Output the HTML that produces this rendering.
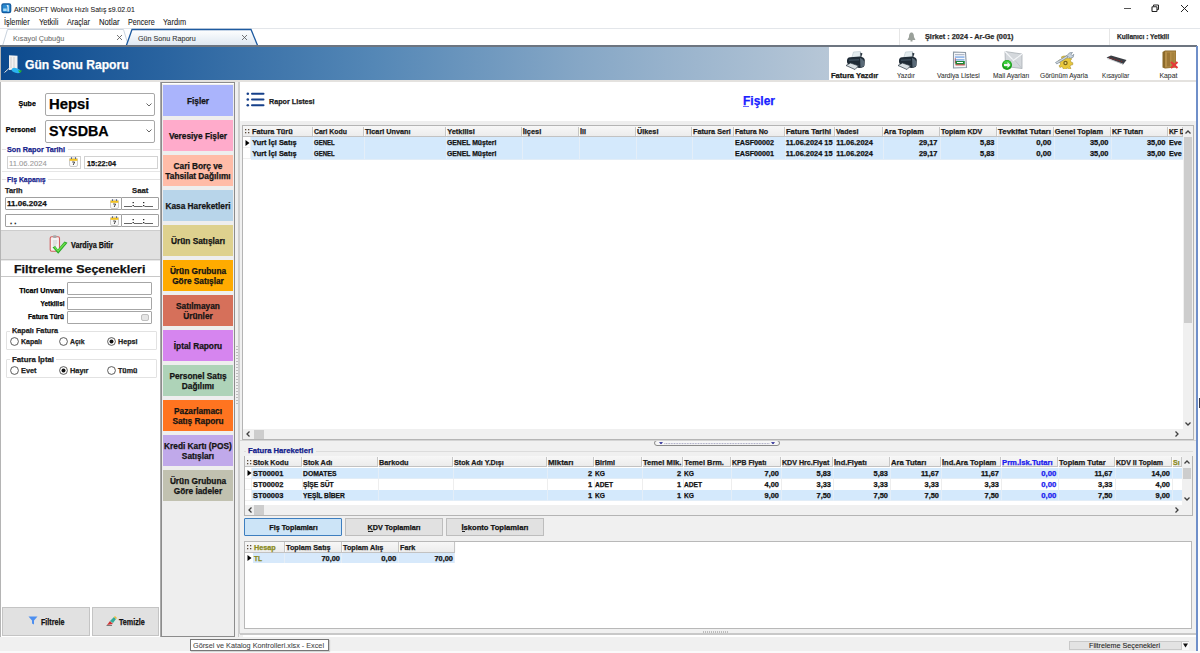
<!DOCTYPE html><html><head><meta charset="utf-8"><style>
html,body{margin:0;padding:0;width:1200px;height:653px;overflow:hidden;background:#fff}
body{position:relative;font-family:"Liberation Sans",sans-serif}
div,span,svg{position:absolute;box-sizing:border-box}
.t{white-space:nowrap;display:block;-webkit-text-stroke:0.25px currentColor}
.r{-webkit-text-stroke:0.08px currentColor}
</style></head><body>
<div style="left:0px;top:0px;width:1200px;height:653px;background:#ffffff"></div>
<svg style="position:absolute;left:1px;top:3px" width="11" height="11" viewBox="0 0 11 11">
<rect x="0.3" y="0.3" width="10" height="10" rx="2.2" fill="#145a9e"/>
<rect x="1.5" y="1.5" width="7.6" height="7.6" rx="1" fill="#2a8ad0"/>
<path d="M2.2 5.5 h3.5 v2.5 h-3.5z" fill="#a8daf6"/>
<path d="M5.5 2 L7.6 2.2 L7.8 8.5 L6.5 8.5 L6.5 4 Z" fill="#f4fbff"/>
</svg>
<span class="t r" style="left:14.40px;top:-0.50px;font-size:7.7px;line-height:20px;font-weight:normal;color:#1b1b1b;transform:scaleX(0.8996);transform-origin:left 0;">AKINSOFT Wolvox Hızlı Satış s9.02.01</span>
<div style="left:1124px;top:7.5px;width:7px;height:1.2px;background:#555"></div>
<svg style="position:absolute;left:1151px;top:4px" width="9" height="8"><path d="M2.5 2.5V1H7.5V5.5H6.2" fill="none" stroke="#222" stroke-width="1"/><rect x="1" y="2.8" width="5" height="4.7" rx="0.8" fill="#fff" stroke="#222" stroke-width="1.1"/></svg>
<svg style="position:absolute;left:1181px;top:4.5px" width="7" height="7"><path d="M0 0L7 7M7 0L0 7" stroke="#222" stroke-width="1"/></svg>
<span class="t r" style="left:4.40px;top:12.00px;font-size:8.3px;line-height:20px;font-weight:normal;color:#1b1b1b;transform:scaleX(0.8812);transform-origin:left 0;">İşlemler</span>
<span class="t r" style="left:38.75px;top:12.00px;font-size:8.3px;line-height:20px;font-weight:normal;color:#1b1b1b;transform:scaleX(0.9074);transform-origin:left 0;">Yetkili</span>
<span class="t r" style="left:66.90px;top:12.00px;font-size:8.3px;line-height:20px;font-weight:normal;color:#1b1b1b;transform:scaleX(0.8711);transform-origin:left 0;">Araçlar</span>
<span class="t r" style="left:98.75px;top:12.00px;font-size:8.3px;line-height:20px;font-weight:normal;color:#1b1b1b;transform:scaleX(0.9305);transform-origin:left 0;">Notlar</span>
<span class="t r" style="left:127.50px;top:12.00px;font-size:8.3px;line-height:20px;font-weight:normal;color:#1b1b1b;transform:scaleX(0.8654);transform-origin:left 0;">Pencere</span>
<span class="t r" style="left:163.00px;top:12.00px;font-size:8.3px;line-height:20px;font-weight:normal;color:#1b1b1b;transform:scaleX(0.8896);transform-origin:left 0;">Yardım</span>
<div style="left:0px;top:28px;width:1200px;height:1px;background:#e3e6ea"></div>
<svg style="position:absolute;left:0;top:28px" width="300" height="19">
<defs><linearGradient id="tg" x1="0" y1="0" x2="0" y2="1"><stop offset="0" stop-color="#ffffff"/><stop offset="1" stop-color="#dbe5f0"/></linearGradient></defs>
<path d="M2.5 18 L7.5 1.5 L123.5 1.5 L128.5 18" fill="#ffffff" stroke="#c9d3de" stroke-width="1"/>
<path d="M126 18.5 L132 1.5 L251 1.5 L258 18.5" fill="url(#tg)" stroke="#1d5aa0" stroke-width="1.3"/>
</svg>
<span class="t r" style="left:13.00px;top:28.50px;font-size:7.8px;line-height:20px;font-weight:normal;color:#6b6b6b;transform:scaleX(0.9307);transform-origin:left 0;">Kısayol Çubuğu</span>
<svg style="position:absolute;left:116.5px;top:34.5px" width="5" height="5"><path d="M0 0L5 5M5 0L0 5" stroke="#555" stroke-width="0.8"/></svg>
<span class="t r" style="left:138.00px;top:28.50px;font-size:7.8px;line-height:20px;font-weight:normal;color:#333;transform:scaleX(0.9185);transform-origin:left 0;">Gün Sonu Raporu</span>
<svg style="position:absolute;left:241.5px;top:34.5px" width="5" height="5"><path d="M0 0L5 5M5 0L0 5" stroke="#555" stroke-width="0.8"/></svg>
<div style="left:899px;top:29px;width:1px;height:16px;background:#e6e6e6"></div>
<svg style="position:absolute;left:907px;top:32px" width="9" height="10"><path d="M4.5 0.5 C6.5 0.5 7 3 7 5 L8.5 8 L0.5 8 L2 5 C2 3 2.5 0.5 4.5 0.5Z" fill="#9aa09a"/><rect x="3.5" y="8" width="2" height="1.5" fill="#9aa09a"/></svg>
<span class="t" style="left:925.30px;top:26.50px;font-size:7px;line-height:20px;font-weight:bold;color:#2b2b2b;transform:scaleX(1.0408);transform-origin:left 0;">Şirket : 2024 - Ar-Ge (001)</span>
<div style="left:1109px;top:29px;width:1px;height:16px;background:#e6e6e6"></div>
<span class="t" style="left:1116.80px;top:26.50px;font-size:7px;line-height:20px;font-weight:bold;color:#2b2b2b;transform:scaleX(0.9370);transform-origin:left 0;">Kullanıcı : Yetkili</span>
<div style="left:0px;top:45px;width:1197px;height:2px;background:#6d7580"></div>
<div style="left:0px;top:47px;width:1px;height:590px;background:#b4b4b4"></div>
<div style="left:1px;top:47px;width:828px;height:33px;background:linear-gradient(to right,#0c4a8e 0%,#2a64a0 20%,#5487b6 45%,#86a7c6 70%,#b7c7d7 100%)"></div>
<div style="left:829px;top:47px;width:367px;height:34px;background:#ffffff"></div>
<div style="left:0px;top:80px;width:1196px;height:2px;background:#e4e2df"></div>
<span class="t" style="left:25.30px;top:55.00px;font-size:12.4px;line-height:20px;font-weight:bold;color:#ffffff;transform:scaleX(0.9776);transform-origin:left 0;">Gün Sonu Raporu</span>
<div style="left:1px;top:82px;width:159px;height:555px;background:#ffffff"></div>
<div style="left:160px;top:82px;width:1px;height:555px;background:#a9a9a9"></div>
<div style="left:45px;top:93px;width:110px;height:23px;border:1px solid #a8a8a8;border-radius:2px;background:#fff"></div>
<svg style="position:absolute;left:146px;top:102.5px" width="6" height="4"><path d="M0.5 0.5L3 3L5.5 0.5" stroke="#555" fill="none" stroke-width="0.9"/></svg>
<div style="left:45px;top:119.5px;width:110px;height:23px;border:1px solid #a8a8a8;border-radius:2px;background:#fff"></div>
<svg style="position:absolute;left:146px;top:129.0px" width="6" height="4"><path d="M0.5 0.5L3 3L5.5 0.5" stroke="#555" fill="none" stroke-width="0.9"/></svg>
<span class="t" style="left:49.30px;top:93.50px;font-size:15.5px;line-height:20px;font-weight:bold;color:#000;transform:scaleX(0.9572);transform-origin:left 0;">Hepsi</span>
<span class="t" style="left:49.00px;top:120.50px;font-size:15.3px;line-height:20px;font-weight:bold;color:#000;transform:scaleX(0.9362);transform-origin:left 0;">SYSDBA</span>
<span class="t" style="left:18.15px;top:93.50px;font-size:7.3px;line-height:20px;font-weight:bold;color:#000;transform:scaleX(0.9694);transform-origin:right 0;">Şube</span>
<span class="t" style="left:5.17px;top:119.50px;font-size:7.3px;line-height:20px;font-weight:bold;color:#000;transform:scaleX(0.9729);transform-origin:right 0;">Personel</span>
<span class="t" style="left:7.00px;top:139.50px;font-size:8px;line-height:20px;font-weight:bold;color:#17238c;transform:scaleX(0.9083);transform-origin:left 0;">Son Rapor Tarihi</span>
<div style="left:2px;top:149px;width:4px;height:1px;background:#e2e2e2"></div>
<div style="left:68px;top:149px;width:92px;height:1px;background:#e2e2e2"></div>
<div style="left:7px;top:156px;width:74px;height:13px;border:1px solid #d2d2d2;background:#fff"></div>
<span class="t r" style="left:9.00px;top:153.50px;font-size:7.6px;line-height:20px;font-weight:normal;color:#9a9a9a;transform:scaleX(1.0088);transform-origin:left 0;">11.06.2024</span>
<svg style="position:absolute;left:69px;top:157px" width="9" height="10" viewBox="0 0 9 10"><rect x="0.5" y="1" width="8" height="8.5" rx="1.5" fill="#fafafa" stroke="#b8b8b8" stroke-width="0.7"/><rect x="0.6" y="1.6" width="7.8" height="2.2" fill="#f0c020"/><rect x="2" y="0.3" width="1" height="1.6" fill="#4a5a8a"/><rect x="6" y="0.3" width="1" height="1.6" fill="#4a5a8a"/><path d="M3.2 5H5.6L4.2 8" stroke="#333" stroke-width="0.9" fill="none"/></svg>
<div style="left:84px;top:156px;width:74px;height:13px;border:1px solid #d2d2d2;background:#fff"></div>
<span class="t" style="left:86.50px;top:153.50px;font-size:7.6px;line-height:20px;font-weight:bold;color:#111;transform:scaleX(0.9534);transform-origin:left 0;">15:22:04</span>
<div style="left:2px;top:171px;width:158px;height:1px;background:#e6e6e6"></div>
<span class="t" style="left:7.00px;top:169.50px;font-size:8px;line-height:20px;font-weight:bold;color:#17238c;transform:scaleX(0.8619);transform-origin:left 0;">Fiş Kapanış</span>
<div style="left:2px;top:178.5px;width:4px;height:1px;background:#e2e2e2"></div>
<div style="left:48px;top:178.5px;width:112px;height:1px;background:#e2e2e2"></div>
<span class="t" style="left:5.40px;top:180.50px;font-size:7.6px;line-height:20px;font-weight:bold;color:#222;transform:scaleX(0.9769);transform-origin:left 0;">Tarih</span>
<span class="t" style="left:131.70px;top:180.50px;font-size:7.6px;line-height:20px;font-weight:bold;color:#222;transform:scaleX(1.0154);transform-origin:left 0;">Saat</span>
<div style="left:5px;top:197px;width:117px;height:13px;border:1px solid #a0a0a0;border-radius:1px;background:#fff"></div>
<div style="left:121px;top:197px;width:38px;height:13px;border:1px solid #a0a0a0;border-radius:1px;background:#fff"></div>
<svg style="position:absolute;left:110px;top:198.5px" width="9" height="10" viewBox="0 0 9 10"><rect x="0.5" y="1" width="8" height="8.5" rx="1.5" fill="#fafafa" stroke="#b8b8b8" stroke-width="0.7"/><rect x="0.6" y="1.6" width="7.8" height="2.2" fill="#f0c020"/><rect x="2" y="0.3" width="1" height="1.6" fill="#4a5a8a"/><rect x="6" y="0.3" width="1" height="1.6" fill="#4a5a8a"/><path d="M3.2 5H5.6L4.2 8" stroke="#333" stroke-width="0.9" fill="none"/></svg>
<svg style="position:absolute;left:124px;top:200px" width="32" height="8"><path d="M0 6.5H8M10 6.5H18.5M20.5 6.5H29" stroke="#555" stroke-width="0.9"/><rect x="8.6" y="2" width="1.2" height="1.2" fill="#111"/><rect x="8.6" y="5" width="1.2" height="1.2" fill="#111"/><rect x="19.1" y="2" width="1.2" height="1.2" fill="#111"/><rect x="19.1" y="5" width="1.2" height="1.2" fill="#111"/></svg>
<div style="left:5px;top:214px;width:117px;height:13px;border:1px solid #a0a0a0;border-radius:1px;background:#fff"></div>
<div style="left:121px;top:214px;width:38px;height:13px;border:1px solid #a0a0a0;border-radius:1px;background:#fff"></div>
<svg style="position:absolute;left:110px;top:215.5px" width="9" height="10" viewBox="0 0 9 10"><rect x="0.5" y="1" width="8" height="8.5" rx="1.5" fill="#fafafa" stroke="#b8b8b8" stroke-width="0.7"/><rect x="0.6" y="1.6" width="7.8" height="2.2" fill="#f0c020"/><rect x="2" y="0.3" width="1" height="1.6" fill="#4a5a8a"/><rect x="6" y="0.3" width="1" height="1.6" fill="#4a5a8a"/><path d="M3.2 5H5.6L4.2 8" stroke="#333" stroke-width="0.9" fill="none"/></svg>
<svg style="position:absolute;left:124px;top:217px" width="32" height="8"><path d="M0 6.5H8M10 6.5H18.5M20.5 6.5H29" stroke="#555" stroke-width="0.9"/><rect x="8.6" y="2" width="1.2" height="1.2" fill="#111"/><rect x="8.6" y="5" width="1.2" height="1.2" fill="#111"/><rect x="19.1" y="2" width="1.2" height="1.2" fill="#111"/><rect x="19.1" y="5" width="1.2" height="1.2" fill="#111"/></svg>
<span class="t" style="left:7.00px;top:193.50px;font-size:7.6px;line-height:20px;font-weight:bold;color:#111;transform:scaleX(1.0555);transform-origin:left 0;">11.06.2024</span>
<span class="t" style="left:10.00px;top:211.50px;font-size:7.6px;line-height:20px;font-weight:bold;color:#111;">. .</span>
<div style="left:1px;top:229.5px;width:159px;height:30px;background:#e1e1e1;border-top:1.5px solid #cdcdcd;border-bottom:1.5px solid #c4c4c4"></div>
<svg style="position:absolute;left:49px;top:235px" width="20" height="20" viewBox="0 0 20 20">
<rect x="1.2" y="1.8" width="9.3" height="14.5" rx="1.5" fill="#f6f0f0" stroke="#d06060" stroke-width="1.1"/>
<rect x="3" y="3.5" width="5.8" height="10" fill="#f4f4f4"/>
<rect x="4" y="0.3" width="3.6" height="2.6" rx="1" fill="#a8a8a8"/>
<path d="M3.8 6h4.5M3.8 8h4.5M3.8 10h3.5" stroke="#c0c0c0" stroke-width="0.8"/>
<path d="M3.5 12.2 L6.2 11 L8.8 14.5 L15.5 6.5 L18.5 7.8 L9.2 18.8 Z" fill="#2aa82a"/>
<path d="M5 12.4 L6.2 11.8 L8.9 15.3 L15.6 7.4 L17 8 L9.2 17 Z" fill="#6ee04a"/>
</svg>
<span class="t" style="left:70.50px;top:235.00px;font-size:8.3px;line-height:20px;font-weight:bold;color:#111;transform:scaleX(0.8712);transform-origin:left 0;">Vardiya Bitir</span>
<div style="left:1px;top:260px;width:159px;height:17px;background:#fff;border-bottom:1px solid #c8c8c8;border-top:1px solid #e8e8e8"></div>
<span class="t" style="left:20.43px;top:259.00px;font-size:11.3px;line-height:20px;font-weight:bold;color:#111;transform:scaleX(1.1011);transform-origin:center 0;">Filtreleme Seçenekleri</span>
<span class="t" style="left:17.97px;top:280.50px;font-size:7.4px;line-height:20px;font-weight:bold;color:#000;transform:scaleX(0.9712);transform-origin:right 0;">Ticari Unvanı</span>
<div style="left:67px;top:282.4px;width:85px;height:12.5px;border:1px solid #a6a6a6;border-radius:1px;background:#fff"></div>
<span class="t" style="left:36.74px;top:293.50px;font-size:7.4px;line-height:20px;font-weight:bold;color:#000;transform:scaleX(0.8708);transform-origin:right 0;">Yetkilisi</span>
<div style="left:67px;top:297px;width:85px;height:12.5px;border:1px solid #a6a6a6;border-radius:1px;background:#fff"></div>
<span class="t" style="left:23.19px;top:306.50px;font-size:7.4px;line-height:20px;font-weight:bold;color:#000;transform:scaleX(0.8757);transform-origin:right 0;">Fatura Türü</span>
<div style="left:67px;top:311.4px;width:85px;height:12.5px;border:1px solid #a6a6a6;border-radius:1px;background:#fff"></div>
<svg style="position:absolute;left:141px;top:314px" width="8" height="7"><rect x="0.5" y="0.5" width="7" height="6" rx="1.5" fill="#e6e6e6" stroke="#aaa" stroke-width="0.7"/></svg>
<div style="left:5.6px;top:330.6px;width:151.2px;height:19.399999999999977px;border:1px solid #e2e2e2;border-radius:1px"></div>
<div style="left:10px;top:328.6px;width:50.2px;height:4px;background:#fff"></div>
<span class="t" style="left:11.70px;top:320.50px;font-size:7.6px;line-height:20px;font-weight:bold;color:#222;transform:scaleX(0.9597);transform-origin:left 0;">Kapalı Fatura</span>
<svg style="position:absolute;left:10px;top:336.5px" width="9" height="9"><circle cx="4.5" cy="4.5" r="3.9" fill="#fff" stroke="#333" stroke-width="0.8"/></svg>
<span class="t" style="left:21.00px;top:331.50px;font-size:7.6px;line-height:20px;font-weight:bold;color:#222;transform:scaleX(0.9208);transform-origin:left 0;">Kapalı</span>
<svg style="position:absolute;left:58.5px;top:336.5px" width="9" height="9"><circle cx="4.5" cy="4.5" r="3.9" fill="#fff" stroke="#333" stroke-width="0.8"/></svg>
<span class="t" style="left:69.50px;top:331.50px;font-size:7.6px;line-height:20px;font-weight:bold;color:#222;transform:scaleX(0.9033);transform-origin:left 0;">Açık</span>
<svg style="position:absolute;left:106.5px;top:336.5px" width="9" height="9"><circle cx="4.5" cy="4.5" r="3.9" fill="#fff" stroke="#333" stroke-width="0.8"/><circle cx="4.5" cy="4.5" r="2" fill="#111"/></svg>
<span class="t" style="left:117.50px;top:331.50px;font-size:7.6px;line-height:20px;font-weight:bold;color:#222;transform:scaleX(0.9423);transform-origin:left 0;">Hepsi</span>
<div style="left:5.6px;top:359.3px;width:151.2px;height:19.099999999999966px;border:1px solid #e2e2e2;border-radius:1px"></div>
<div style="left:10px;top:357.3px;width:46px;height:4px;background:#fff"></div>
<span class="t" style="left:11.70px;top:349.50px;font-size:7.6px;line-height:20px;font-weight:bold;color:#222;transform:scaleX(1.0254);transform-origin:left 0;">Fatura İptal</span>
<svg style="position:absolute;left:10px;top:365.5px" width="9" height="9"><circle cx="4.5" cy="4.5" r="3.9" fill="#fff" stroke="#333" stroke-width="0.8"/></svg>
<span class="t" style="left:21.00px;top:360.50px;font-size:7.6px;line-height:20px;font-weight:bold;color:#222;transform:scaleX(0.9656);transform-origin:left 0;">Evet</span>
<svg style="position:absolute;left:58.5px;top:365.5px" width="9" height="9"><circle cx="4.5" cy="4.5" r="3.9" fill="#fff" stroke="#333" stroke-width="0.8"/><circle cx="4.5" cy="4.5" r="2" fill="#111"/></svg>
<span class="t" style="left:69.50px;top:360.50px;font-size:7.6px;line-height:20px;font-weight:bold;color:#222;transform:scaleX(0.9731);transform-origin:left 0;">Hayır</span>
<svg style="position:absolute;left:106.5px;top:365.5px" width="9" height="9"><circle cx="4.5" cy="4.5" r="3.9" fill="#fff" stroke="#333" stroke-width="0.8"/></svg>
<span class="t" style="left:117.50px;top:360.50px;font-size:7.6px;line-height:20px;font-weight:bold;color:#222;transform:scaleX(0.9428);transform-origin:left 0;">Tümü</span>
<div style="left:2px;top:606.7px;width:88.4px;height:29.6px;background:#e1e1e1;border:1px solid #c4c4c4"></div>
<div style="left:92.2px;top:606.7px;width:67px;height:29.6px;background:#e1e1e1;border:1px solid #c4c4c4"></div>
<svg style="position:absolute;left:28px;top:616px" width="10" height="9"><path d="M0.5 0.5H9.5L6 4.5V8.5L4 7.5V4.5Z" fill="#4d8ff0"/></svg>
<span class="t" style="left:40.60px;top:612.50px;font-size:8.2px;line-height:20px;font-weight:bold;color:#111;transform:scaleX(0.8704);transform-origin:left 0;">Filtrele</span>
<svg style="position:absolute;left:106px;top:615px" width="11" height="11"><path d="M1 10 L4 6 L7 9Z" fill="#c33"/><path d="M4 6 L8 2 L10 4 L7 8Z" fill="#3a9"/><path d="M8 2 L9 1 L11 3 L10 4Z" fill="#eb3"/><path d="M0.5 10.5H6" stroke="#333" stroke-width="0.6"/></svg>
<span class="t" style="left:119.20px;top:612.50px;font-size:8.2px;line-height:20px;font-weight:bold;color:#111;transform:scaleX(0.8755);transform-origin:left 0;">Temizle</span>
<div style="left:161px;top:82px;width:74px;height:555px;background:#eeeeee;border:1px solid #8c8c8c"></div>
<div style="left:162px;top:83px;width:72px;height:1px;background:#fff"></div>
<div style="left:163px;top:85px;width:69.5px;height:31px;background:#aab4fc"></div>
<span class="t" style="left:186.93px;top:91.00px;font-size:8.3px;line-height:20px;font-weight:bold;color:#141414;">Fişler</span>
<div style="left:163px;top:120px;width:69.5px;height:31px;background:#ffabcb"></div>
<span class="t" style="left:168.93px;top:126.00px;font-size:8.3px;line-height:20px;font-weight:bold;color:#141414;">Veresiye Fişler</span>
<div style="left:163px;top:155px;width:69.5px;height:31px;background:#ffbca8"></div>
<span class="t" style="left:173.55px;top:156.00px;font-size:8.3px;line-height:20px;font-weight:bold;color:#141414;">Cari Borç ve</span>
<span class="t" style="left:165.33px;top:166.00px;font-size:8.3px;line-height:20px;font-weight:bold;color:#141414;">Tahsilat Dağılımı</span>
<div style="left:163px;top:190px;width:69.5px;height:31px;background:#b8d5ea"></div>
<span class="t" style="left:165.47px;top:196.00px;font-size:8.3px;line-height:20px;font-weight:bold;color:#141414;">Kasa Hareketleri</span>
<div style="left:163px;top:225px;width:69.5px;height:31px;background:#ded18e"></div>
<span class="t" style="left:171.02px;top:231.00px;font-size:8.3px;line-height:20px;font-weight:bold;color:#141414;">Ürün Satışları</span>
<div style="left:163px;top:260px;width:69.5px;height:31px;background:#ffab00"></div>
<span class="t" style="left:169.88px;top:261.00px;font-size:8.3px;line-height:20px;font-weight:bold;color:#141414;">Ürün Grubuna</span>
<span class="t" style="left:172.17px;top:271.00px;font-size:8.3px;line-height:20px;font-weight:bold;color:#141414;">Göre Satışlar</span>
<div style="left:163px;top:295px;width:69.5px;height:31px;background:#d6705a"></div>
<span class="t" style="left:176.09px;top:296.00px;font-size:8.3px;line-height:20px;font-weight:bold;color:#141414;">Satılmayan</span>
<span class="t" style="left:183.24px;top:306.00px;font-size:8.3px;line-height:20px;font-weight:bold;color:#141414;">Ürünler</span>
<div style="left:163px;top:330px;width:69.5px;height:31px;background:#d685ef"></div>
<span class="t" style="left:173.79px;top:336.00px;font-size:8.3px;line-height:20px;font-weight:bold;color:#141414;">İptal Raporu</span>
<div style="left:163px;top:365px;width:69.5px;height:31px;background:#aed3b8"></div>
<span class="t" style="left:169.40px;top:366.00px;font-size:8.3px;line-height:20px;font-weight:bold;color:#141414;">Personel Satış</span>
<span class="t" style="left:181.86px;top:376.00px;font-size:8.3px;line-height:20px;font-weight:bold;color:#141414;">Dağılımı</span>
<div style="left:163px;top:400px;width:69.5px;height:31px;background:#ff7420"></div>
<span class="t" style="left:174.01px;top:401.00px;font-size:8.3px;line-height:20px;font-weight:bold;color:#141414;">Pazarlamacı</span>
<span class="t" style="left:172.40px;top:411.00px;font-size:8.3px;line-height:20px;font-weight:bold;color:#141414;">Satış Raporu</span>
<div style="left:163px;top:435px;width:69.5px;height:31px;background:#c0a9ea"></div>
<span class="t" style="left:164.10px;top:436.00px;font-size:8.3px;line-height:20px;font-weight:bold;color:#141414;">Kredi Kartı (POS)</span>
<span class="t" style="left:181.85px;top:446.00px;font-size:8.3px;line-height:20px;font-weight:bold;color:#141414;">Satışları</span>
<div style="left:163px;top:470px;width:69.5px;height:31px;background:#c1c1b0"></div>
<span class="t" style="left:169.88px;top:471.00px;font-size:8.3px;line-height:20px;font-weight:bold;color:#141414;">Ürün Grubuna</span>
<span class="t" style="left:173.78px;top:481.00px;font-size:8.3px;line-height:20px;font-weight:bold;color:#141414;">Göre İadeler</span>
<div style="left:235px;top:82px;width:8px;height:555px;background:#f0f0f0"></div>
<div style="left:237.5px;top:82px;width:1px;height:555px;background:#c9c9c9"></div>
<div style="left:238px;top:82px;width:1.5px;height:552px;background:#cfcfcf"></div>
<div style="left:239.5px;top:82px;width:957px;height:39px;background:#ffffff"></div>
<div style="left:239.5px;top:121px;width:957px;height:513px;background:#f0f0f0"></div>
<div style="left:242px;top:121px;width:951px;height:4px;background:#eeeeee"></div>
<svg style="position:absolute;left:246px;top:92px" width="20" height="16">
<circle cx="1.8" cy="1.8" r="1.3" fill="#16408a"/><circle cx="1.8" cy="7.5" r="1.3" fill="#16408a"/><circle cx="1.8" cy="13.3" r="1.3" fill="#16408a"/>
<rect x="5" y="0.8" width="13.5" height="2" rx="1" fill="#16408a"/><rect x="5" y="6.5" width="13.5" height="2" rx="1" fill="#16408a"/><rect x="5" y="12.3" width="13.5" height="2" rx="1" fill="#16408a"/>
</svg>
<span class="t" style="left:269.00px;top:91.50px;font-size:7.4px;line-height:20px;font-weight:bold;color:#1b1b1b;transform:scaleX(0.9728);transform-origin:left 0;">Rapor Listesi</span>
<span class="t" style="left:742.99px;top:91.00px;font-size:12px;line-height:20px;font-weight:bold;color:#1a22ff;">Fişler</span>
<div style="left:743px;top:106px;width:6px;height:1px;background:#6a6aff"></div>
<div style="left:242px;top:125px;width:951.5px;height:314.5px;background:#ffffff;border:1px solid #b4b4b4"></div>
<div style="left:243px;top:125.5px;width:949.5px;height:11px;background:linear-gradient(#f7f7f7,#ececec);border-bottom:1px solid #c2c2c2"></div>
<svg style="position:absolute;left:245px;top:129.0px" width="6" height="5"><rect x="0" y="0" width="1.3" height="1.3" fill="#5a4a3a"/><rect x="3" y="0" width="1.3" height="1.3" fill="#5a4a3a"/><rect x="0" y="3" width="1.3" height="1.3" fill="#5a4a3a"/><rect x="3" y="3" width="1.3" height="1.3" fill="#5a4a3a"/></svg>
<div style="left:312px;top:126.5px;width:1px;height:9.5px;background:#c6c6c6;border-right:1px solid #fbfbfb;width:2px"></div>
<div style="left:251px;top:120px;width:62.5px;height:18px;overflow:hidden"><span class="t" style="left:1.2px;top:1.50px;font-size:7.4px;line-height:20px;font-weight:bold;color:#1b1b1b;transform:scaleX(0.9900);transform-origin:left 0;">Fatura Türü</span></div>
<div style="left:363px;top:126.5px;width:1px;height:9.5px;background:#c6c6c6;border-right:1px solid #fbfbfb;width:2px"></div>
<div style="left:313px;top:120px;width:51.5px;height:18px;overflow:hidden"><span class="t" style="left:1.2px;top:1.50px;font-size:7.4px;line-height:20px;font-weight:bold;color:#1b1b1b;transform:scaleX(0.9300);transform-origin:left 0;">Cari Kodu</span></div>
<div style="left:445px;top:126.5px;width:1px;height:9.5px;background:#c6c6c6;border-right:1px solid #fbfbfb;width:2px"></div>
<div style="left:364px;top:120px;width:82.5px;height:18px;overflow:hidden"><span class="t" style="left:1.2px;top:1.50px;font-size:7.4px;line-height:20px;font-weight:bold;color:#1b1b1b;transform:scaleX(0.9833);transform-origin:left 0;">Ticari Unvanı</span></div>
<div style="left:520.5px;top:126.5px;width:1px;height:9.5px;background:#c6c6c6;border-right:1px solid #fbfbfb;width:2px"></div>
<div style="left:446px;top:120px;width:76.0px;height:18px;overflow:hidden"><span class="t" style="left:1.2px;top:1.50px;font-size:7.4px;line-height:20px;font-weight:bold;color:#1b1b1b;">Yetkilisi</span></div>
<div style="left:577.5px;top:126.5px;width:1px;height:9.5px;background:#c6c6c6;border-right:1px solid #fbfbfb;width:2px"></div>
<div style="left:521.5px;top:120px;width:57.5px;height:18px;overflow:hidden"><span class="t" style="left:1.2px;top:1.50px;font-size:7.4px;line-height:20px;font-weight:bold;color:#1b1b1b;">İlçesi</span></div>
<div style="left:634.5px;top:126.5px;width:1px;height:9.5px;background:#c6c6c6;border-right:1px solid #fbfbfb;width:2px"></div>
<div style="left:578.5px;top:120px;width:57.5px;height:18px;overflow:hidden"><span class="t" style="left:1.2px;top:1.50px;font-size:7.4px;line-height:20px;font-weight:bold;color:#1b1b1b;transform:scaleX(0.9667);transform-origin:left 0;">İli</span></div>
<div style="left:691px;top:126.5px;width:1px;height:9.5px;background:#c6c6c6;border-right:1px solid #fbfbfb;width:2px"></div>
<div style="left:635.5px;top:120px;width:57.0px;height:18px;overflow:hidden"><span class="t" style="left:1.2px;top:1.50px;font-size:7.4px;line-height:20px;font-weight:bold;color:#1b1b1b;transform:scaleX(0.9833);transform-origin:left 0;">Ülkesi</span></div>
<div style="left:733px;top:126.5px;width:1px;height:9.5px;background:#c6c6c6;border-right:1px solid #fbfbfb;width:2px"></div>
<div style="left:692px;top:120px;width:42.5px;height:18px;overflow:hidden"><span class="t" style="left:1.2px;top:1.50px;font-size:7.4px;line-height:20px;font-weight:bold;color:#1b1b1b;transform:scaleX(0.9800);transform-origin:left 0;">Fatura Seri</span></div>
<div style="left:783.5px;top:126.5px;width:1px;height:9.5px;background:#c6c6c6;border-right:1px solid #fbfbfb;width:2px"></div>
<div style="left:734px;top:120px;width:51.0px;height:18px;overflow:hidden"><span class="t" style="left:1.2px;top:1.50px;font-size:7.4px;line-height:20px;font-weight:bold;color:#1b1b1b;transform:scaleX(0.9600);transform-origin:left 0;">Fatura No</span></div>
<div style="left:834px;top:126.5px;width:1px;height:9.5px;background:#c6c6c6;border-right:1px solid #fbfbfb;width:2px"></div>
<div style="left:784.5px;top:120px;width:51.0px;height:18px;overflow:hidden"><span class="t" style="left:1.2px;top:1.50px;font-size:7.4px;line-height:20px;font-weight:bold;color:#1b1b1b;transform:scaleX(1.0200);transform-origin:left 0;">Fatura Tarihi</span></div>
<div style="left:881.5px;top:126.5px;width:1px;height:9.5px;background:#c6c6c6;border-right:1px solid #fbfbfb;width:2px"></div>
<div style="left:835px;top:120px;width:48.0px;height:18px;overflow:hidden"><span class="t" style="left:1.2px;top:1.50px;font-size:7.4px;line-height:20px;font-weight:bold;color:#1b1b1b;transform:scaleX(0.9600);transform-origin:left 0;">Vadesi</span></div>
<div style="left:938.5px;top:126.5px;width:1px;height:9.5px;background:#c6c6c6;border-right:1px solid #fbfbfb;width:2px"></div>
<div style="left:882.5px;top:120px;width:57.5px;height:18px;overflow:hidden"><span class="t" style="left:1.2px;top:1.50px;font-size:7.4px;line-height:20px;font-weight:bold;color:#1b1b1b;">Ara Toplam</span></div>
<div style="left:995.5px;top:126.5px;width:1px;height:9.5px;background:#c6c6c6;border-right:1px solid #fbfbfb;width:2px"></div>
<div style="left:939.5px;top:120px;width:57.5px;height:18px;overflow:hidden"><span class="t" style="left:1.2px;top:1.50px;font-size:7.4px;line-height:20px;font-weight:bold;color:#1b1b1b;transform:scaleX(0.9500);transform-origin:left 0;">Toplam KDV</span></div>
<div style="left:1052.5px;top:126.5px;width:1px;height:9.5px;background:#c6c6c6;border-right:1px solid #fbfbfb;width:2px"></div>
<div style="left:996.5px;top:120px;width:57.5px;height:18px;overflow:hidden"><span class="t" style="left:1.2px;top:1.50px;font-size:7.4px;line-height:20px;font-weight:bold;color:#1b1b1b;transform:scaleX(1.0700);transform-origin:left 0;">Tevkifat Tutarı</span></div>
<div style="left:1109.5px;top:126.5px;width:1px;height:9.5px;background:#c6c6c6;border-right:1px solid #fbfbfb;width:2px"></div>
<div style="left:1053.5px;top:120px;width:57.5px;height:18px;overflow:hidden"><span class="t" style="left:1.2px;top:1.50px;font-size:7.4px;line-height:20px;font-weight:bold;color:#1b1b1b;">Genel Toplam</span></div>
<div style="left:1166.5px;top:126.5px;width:1px;height:9.5px;background:#c6c6c6;border-right:1px solid #fbfbfb;width:2px"></div>
<div style="left:1110.5px;top:120px;width:57.5px;height:18px;overflow:hidden"><span class="t" style="left:1.2px;top:1.50px;font-size:7.4px;line-height:20px;font-weight:bold;color:#1b1b1b;transform:scaleX(0.9700);transform-origin:left 0;">KF Tutarı</span></div>
<div style="left:1181.5px;top:126.5px;width:1px;height:9.5px;background:#c6c6c6;border-right:1px solid #fbfbfb;width:2px"></div>
<div style="left:1167.5px;top:120px;width:15.5px;height:18px;overflow:hidden"><span class="t" style="left:1.2px;top:1.50px;font-size:7.4px;line-height:20px;font-weight:bold;color:#1b1b1b;transform:scaleX(0.9000);transform-origin:left 0;">KF D</span></div>
<div style="left:251px;top:137px;width:931.5px;height:11px;background:#d4e9fc"></div>
<div style="left:251px;top:147.5px;width:931.5px;height:1px;background:#e2edf7"></div>
<div style="left:313px;top:137px;width:1px;height:11px;background:#e4eef8"></div>
<div style="left:251px;top:131px;width:62.5px;height:18px;overflow:hidden"><span class="t" style="left:1.2px;top:1.50px;font-size:7.4px;line-height:20px;font-weight:bold;color:#111111;">Yurt İçi Satış</span></div>
<div style="left:364px;top:137px;width:1px;height:11px;background:#e4eef8"></div>
<div style="left:313px;top:131px;width:51.5px;height:18px;overflow:hidden"><span class="t" style="left:1.2px;top:1.50px;font-size:7.4px;line-height:20px;font-weight:bold;color:#111111;transform:scaleX(0.8100);transform-origin:left 0;">GENEL</span></div>
<div style="left:446px;top:137px;width:1px;height:11px;background:#e4eef8"></div>
<div style="left:521.5px;top:137px;width:1px;height:11px;background:#e4eef8"></div>
<div style="left:446px;top:131px;width:76.0px;height:18px;overflow:hidden"><span class="t" style="left:1.2px;top:1.50px;font-size:7.4px;line-height:20px;font-weight:bold;color:#111111;transform:scaleX(0.9200);transform-origin:left 0;">GENEL Müşteri</span></div>
<div style="left:578.5px;top:137px;width:1px;height:11px;background:#e4eef8"></div>
<div style="left:635.5px;top:137px;width:1px;height:11px;background:#e4eef8"></div>
<div style="left:692px;top:137px;width:1px;height:11px;background:#e4eef8"></div>
<div style="left:734px;top:137px;width:1px;height:11px;background:#e4eef8"></div>
<div style="left:784.5px;top:137px;width:1px;height:11px;background:#e4eef8"></div>
<div style="left:734px;top:131px;width:51.0px;height:18px;overflow:hidden"><span class="t" style="left:1.2px;top:1.50px;font-size:7.4px;line-height:20px;font-weight:bold;color:#111111;transform:scaleX(0.9700);transform-origin:left 0;">EASF00002</span></div>
<div style="left:835px;top:137px;width:1px;height:11px;background:#e4eef8"></div>
<div style="left:784.5px;top:131px;width:51.0px;height:18px;overflow:hidden"><span class="t" style="left:1.2px;top:1.50px;font-size:7.4px;line-height:20px;font-weight:bold;color:#111111;">11.06.2024 15</span></div>
<div style="left:882.5px;top:137px;width:1px;height:11px;background:#e4eef8"></div>
<div style="left:835px;top:131px;width:48.0px;height:18px;overflow:hidden"><span class="t" style="left:1.2px;top:1.50px;font-size:7.4px;line-height:20px;font-weight:bold;color:#111111;">11.06.2024</span></div>
<div style="left:939.5px;top:137px;width:1px;height:11px;background:#e4eef8"></div>
<span class="t" style="left:918.98px;top:132.50px;font-size:7.4px;line-height:20px;font-weight:bold;color:#111111;">29,17</span>
<div style="left:996.5px;top:137px;width:1px;height:11px;background:#e4eef8"></div>
<span class="t" style="left:980.10px;top:132.50px;font-size:7.4px;line-height:20px;font-weight:bold;color:#111111;">5,83</span>
<div style="left:1053.5px;top:137px;width:1px;height:11px;background:#e4eef8"></div>
<span class="t" style="left:1037.10px;top:132.50px;font-size:7.4px;line-height:20px;font-weight:bold;color:#111111;transform:scaleX(1.0500);transform-origin:right 0;">0,00</span>
<div style="left:1110.5px;top:137px;width:1px;height:11px;background:#e4eef8"></div>
<span class="t" style="left:1089.98px;top:132.50px;font-size:7.4px;line-height:20px;font-weight:bold;color:#111111;">35,00</span>
<div style="left:1167.5px;top:137px;width:1px;height:11px;background:#e4eef8"></div>
<span class="t" style="left:1146.98px;top:132.50px;font-size:7.4px;line-height:20px;font-weight:bold;color:#111111;">35,00</span>
<div style="left:1182.5px;top:137px;width:1px;height:11px;background:#e4eef8"></div>
<div style="left:1167.5px;top:131px;width:15.5px;height:18px;overflow:hidden"><span class="t" style="left:1.2px;top:1.50px;font-size:7.4px;line-height:20px;font-weight:bold;color:#111111;transform:scaleX(0.9667);transform-origin:left 0;">Eve</span></div>
<div style="left:250px;top:137px;width:1px;height:11px;background:#eeeeee"></div>
<div style="left:243px;top:147px;width:7px;height:1px;background:#f0f0f0"></div>
<svg style="position:absolute;left:245px;top:139.5px" width="5" height="6"><path d="M0.5 0L4.5 3L0.5 6Z" fill="#000"/></svg>
<div style="left:251px;top:148px;width:931.5px;height:11px;background:#d4e9fc"></div>
<div style="left:251px;top:158.5px;width:931.5px;height:1px;background:#e2edf7"></div>
<div style="left:313px;top:148px;width:1px;height:11px;background:#e4eef8"></div>
<div style="left:251px;top:142px;width:62.5px;height:18px;overflow:hidden"><span class="t" style="left:1.2px;top:1.50px;font-size:7.4px;line-height:20px;font-weight:bold;color:#111111;">Yurt İçi Satış</span></div>
<div style="left:364px;top:148px;width:1px;height:11px;background:#e4eef8"></div>
<div style="left:313px;top:142px;width:51.5px;height:18px;overflow:hidden"><span class="t" style="left:1.2px;top:1.50px;font-size:7.4px;line-height:20px;font-weight:bold;color:#111111;transform:scaleX(0.8100);transform-origin:left 0;">GENEL</span></div>
<div style="left:446px;top:148px;width:1px;height:11px;background:#e4eef8"></div>
<div style="left:521.5px;top:148px;width:1px;height:11px;background:#e4eef8"></div>
<div style="left:446px;top:142px;width:76.0px;height:18px;overflow:hidden"><span class="t" style="left:1.2px;top:1.50px;font-size:7.4px;line-height:20px;font-weight:bold;color:#111111;transform:scaleX(0.9200);transform-origin:left 0;">GENEL Müşteri</span></div>
<div style="left:578.5px;top:148px;width:1px;height:11px;background:#e4eef8"></div>
<div style="left:635.5px;top:148px;width:1px;height:11px;background:#e4eef8"></div>
<div style="left:692px;top:148px;width:1px;height:11px;background:#e4eef8"></div>
<div style="left:734px;top:148px;width:1px;height:11px;background:#e4eef8"></div>
<div style="left:784.5px;top:148px;width:1px;height:11px;background:#e4eef8"></div>
<div style="left:734px;top:142px;width:51.0px;height:18px;overflow:hidden"><span class="t" style="left:1.2px;top:1.50px;font-size:7.4px;line-height:20px;font-weight:bold;color:#111111;transform:scaleX(0.9700);transform-origin:left 0;">EASF00001</span></div>
<div style="left:835px;top:148px;width:1px;height:11px;background:#e4eef8"></div>
<div style="left:784.5px;top:142px;width:51.0px;height:18px;overflow:hidden"><span class="t" style="left:1.2px;top:1.50px;font-size:7.4px;line-height:20px;font-weight:bold;color:#111111;">11.06.2024 15</span></div>
<div style="left:882.5px;top:148px;width:1px;height:11px;background:#e4eef8"></div>
<div style="left:835px;top:142px;width:48.0px;height:18px;overflow:hidden"><span class="t" style="left:1.2px;top:1.50px;font-size:7.4px;line-height:20px;font-weight:bold;color:#111111;">11.06.2024</span></div>
<div style="left:939.5px;top:148px;width:1px;height:11px;background:#e4eef8"></div>
<span class="t" style="left:918.98px;top:143.50px;font-size:7.4px;line-height:20px;font-weight:bold;color:#111111;">29,17</span>
<div style="left:996.5px;top:148px;width:1px;height:11px;background:#e4eef8"></div>
<span class="t" style="left:980.10px;top:143.50px;font-size:7.4px;line-height:20px;font-weight:bold;color:#111111;">5,83</span>
<div style="left:1053.5px;top:148px;width:1px;height:11px;background:#e4eef8"></div>
<span class="t" style="left:1037.10px;top:143.50px;font-size:7.4px;line-height:20px;font-weight:bold;color:#111111;transform:scaleX(1.0500);transform-origin:right 0;">0,00</span>
<div style="left:1110.5px;top:148px;width:1px;height:11px;background:#e4eef8"></div>
<span class="t" style="left:1089.98px;top:143.50px;font-size:7.4px;line-height:20px;font-weight:bold;color:#111111;">35,00</span>
<div style="left:1167.5px;top:148px;width:1px;height:11px;background:#e4eef8"></div>
<span class="t" style="left:1146.98px;top:143.50px;font-size:7.4px;line-height:20px;font-weight:bold;color:#111111;">35,00</span>
<div style="left:1182.5px;top:148px;width:1px;height:11px;background:#e4eef8"></div>
<div style="left:1167.5px;top:142px;width:15.5px;height:18px;overflow:hidden"><span class="t" style="left:1.2px;top:1.50px;font-size:7.4px;line-height:20px;font-weight:bold;color:#111111;transform:scaleX(0.9667);transform-origin:left 0;">Eve</span></div>
<div style="left:250px;top:148px;width:1px;height:11px;background:#eeeeee"></div>
<div style="left:243px;top:158px;width:7px;height:1px;background:#f0f0f0"></div>
<div style="left:1182.5px;top:125.5px;width:10.0px;height:303.5px;background:#f0f0f0"></div>
<div style="left:1183.5px;top:137px;width:8.0px;height:185.5px;background:#cdcdcd"></div>
<svg style="position:absolute;left:1184.5px;top:129.5px" width="6" height="4"><path d="M0.5 3.5L3 1L5.5 3.5" stroke="#404040" fill="none" stroke-width="1.3"/></svg>
<svg style="position:absolute;left:1184.5px;top:421.5px" width="6" height="4"><path d="M0.5 0.5L3 3L5.5 0.5" stroke="#404040" fill="none" stroke-width="1.3"/></svg>
<div style="left:243px;top:429px;width:949.5px;height:10px;background:#f0f0f0"></div>
<div style="left:254px;top:429.5px;width:10px;height:9px;background:#cdcdcd"></div>
<svg style="position:absolute;left:245.5px;top:431.0px" width="4" height="6"><path d="M3.5 0.5L1 3L3.5 5.5" stroke="#404040" fill="none" stroke-width="1.3"/></svg>
<svg style="position:absolute;left:1175px;top:431.0px" width="4" height="6"><path d="M0.5 0.5L3 3L0.5 5.5" stroke="#404040" fill="none" stroke-width="1.3"/></svg>
<svg style="position:absolute;left:654px;top:440px" width="127" height="6">
<rect x="0.5" y="0.5" width="125" height="5" rx="2.5" fill="#f6f6f6" stroke="#8a8a8a" stroke-width="1"/>
<path d="M5 2.2L9 2.2L7 4.3Z" fill="#10108a"/><path d="M117 2.2L121 2.2L119 4.3Z" fill="#10108a"/>
<path d="M10.5 3.6H116" stroke="#6a6a9a" stroke-width="0.7" stroke-dasharray="0.8 0.8"/>
</svg>
<div style="left:239.5px;top:440px;width:957px;height:1px;background:#d4d4d4"></div>
<div style="left:243.5px;top:450.5px;width:949px;height:1px;background:#dcdcdc"></div>
<div style="left:246px;top:446px;width:70px;height:8px;background:#f0f0f0"></div>
<span class="t" style="left:248.00px;top:440.50px;font-size:7.4px;line-height:20px;font-weight:bold;color:#13208c;transform:scaleX(1.0361);transform-origin:left 0;">Fatura Hareketleri</span>
<div style="left:244px;top:455.5px;width:948.5px;height:60.5px;background:#ffffff;border:1px solid #b4b4b4"></div>
<div style="left:245px;top:456.0px;width:946.5px;height:11px;background:linear-gradient(#f7f7f7,#ececec);border-bottom:1px solid #c2c2c2"></div>
<svg style="position:absolute;left:247px;top:459.5px" width="6" height="5"><rect x="0" y="0" width="1.3" height="1.3" fill="#5a4a3a"/><rect x="3" y="0" width="1.3" height="1.3" fill="#5a4a3a"/><rect x="0" y="3" width="1.3" height="1.3" fill="#5a4a3a"/><rect x="3" y="3" width="1.3" height="1.3" fill="#5a4a3a"/></svg>
<div style="left:301px;top:457.0px;width:1px;height:9.5px;background:#c6c6c6;border-right:1px solid #fbfbfb;width:2px"></div>
<div style="left:252px;top:451px;width:50.5px;height:18px;overflow:hidden"><span class="t" style="left:1.2px;top:1.50px;font-size:7.4px;line-height:20px;font-weight:bold;color:#1b1b1b;transform:scaleX(0.9600);transform-origin:left 0;">Stok Kodu</span></div>
<div style="left:376.5px;top:457.0px;width:1px;height:9.5px;background:#c6c6c6;border-right:1px solid #fbfbfb;width:2px"></div>
<div style="left:302px;top:451px;width:76.0px;height:18px;overflow:hidden"><span class="t" style="left:1.2px;top:1.50px;font-size:7.4px;line-height:20px;font-weight:bold;color:#1b1b1b;transform:scaleX(0.9900);transform-origin:left 0;">Stok Adı</span></div>
<div style="left:451.5px;top:457.0px;width:1px;height:9.5px;background:#c6c6c6;border-right:1px solid #fbfbfb;width:2px"></div>
<div style="left:377.5px;top:451px;width:75.5px;height:18px;overflow:hidden"><span class="t" style="left:1.2px;top:1.50px;font-size:7.4px;line-height:20px;font-weight:bold;color:#1b1b1b;transform:scaleX(0.9857);transform-origin:left 0;">Barkodu</span></div>
<div style="left:546px;top:457.0px;width:1px;height:9.5px;background:#c6c6c6;border-right:1px solid #fbfbfb;width:2px"></div>
<div style="left:452.5px;top:451px;width:95.0px;height:18px;overflow:hidden"><span class="t" style="left:1.2px;top:1.50px;font-size:7.4px;line-height:20px;font-weight:bold;color:#1b1b1b;transform:scaleX(0.9692);transform-origin:left 0;">Stok Adı Y.Dışı</span></div>
<div style="left:593px;top:457.0px;width:1px;height:9.5px;background:#c6c6c6;border-right:1px solid #fbfbfb;width:2px"></div>
<div style="left:547px;top:451px;width:47.5px;height:18px;overflow:hidden"><span class="t" style="left:1.2px;top:1.50px;font-size:7.4px;line-height:20px;font-weight:bold;color:#1b1b1b;transform:scaleX(1.0700);transform-origin:left 0;">Miktarı</span></div>
<div style="left:641px;top:457.0px;width:1px;height:9.5px;background:#c6c6c6;border-right:1px solid #fbfbfb;width:2px"></div>
<div style="left:594px;top:451px;width:48.5px;height:18px;overflow:hidden"><span class="t" style="left:1.2px;top:1.50px;font-size:7.4px;line-height:20px;font-weight:bold;color:#1b1b1b;transform:scaleX(0.9500);transform-origin:left 0;">Birimi</span></div>
<div style="left:682px;top:457.0px;width:1px;height:9.5px;background:#c6c6c6;border-right:1px solid #fbfbfb;width:2px"></div>
<div style="left:642px;top:451px;width:41.5px;height:18px;overflow:hidden"><span class="t" style="left:1.2px;top:1.50px;font-size:7.4px;line-height:20px;font-weight:bold;color:#1b1b1b;transform:scaleX(1.0300);transform-origin:left 0;">Temel Mik.</span></div>
<div style="left:730px;top:457.0px;width:1px;height:9.5px;background:#c6c6c6;border-right:1px solid #fbfbfb;width:2px"></div>
<div style="left:683px;top:451px;width:48.5px;height:18px;overflow:hidden"><span class="t" style="left:1.2px;top:1.50px;font-size:7.4px;line-height:20px;font-weight:bold;color:#1b1b1b;">Temel Brm.</span></div>
<div style="left:780px;top:457.0px;width:1px;height:9.5px;background:#c6c6c6;border-right:1px solid #fbfbfb;width:2px"></div>
<div style="left:731px;top:451px;width:50.5px;height:18px;overflow:hidden"><span class="t" style="left:1.2px;top:1.50px;font-size:7.4px;line-height:20px;font-weight:bold;color:#1b1b1b;transform:scaleX(0.9300);transform-origin:left 0;">KPB Fiyatı</span></div>
<div style="left:832px;top:457.0px;width:1px;height:9.5px;background:#c6c6c6;border-right:1px solid #fbfbfb;width:2px"></div>
<div style="left:781px;top:451px;width:52.5px;height:18px;overflow:hidden"><span class="t" style="left:1.2px;top:1.50px;font-size:7.4px;line-height:20px;font-weight:bold;color:#1b1b1b;transform:scaleX(0.9600);transform-origin:left 0;">KDV Hrc.Fiyat</span></div>
<div style="left:889px;top:457.0px;width:1px;height:9.5px;background:#c6c6c6;border-right:1px solid #fbfbfb;width:2px"></div>
<div style="left:833px;top:451px;width:57.5px;height:18px;overflow:hidden"><span class="t" style="left:1.2px;top:1.50px;font-size:7.4px;line-height:20px;font-weight:bold;color:#1b1b1b;transform:scaleX(1.0100);transform-origin:left 0;">İnd.Fiyatı</span></div>
<div style="left:940px;top:457.0px;width:1px;height:9.5px;background:#c6c6c6;border-right:1px solid #fbfbfb;width:2px"></div>
<div style="left:890px;top:451px;width:51.5px;height:18px;overflow:hidden"><span class="t" style="left:1.2px;top:1.50px;font-size:7.4px;line-height:20px;font-weight:bold;color:#1b1b1b;transform:scaleX(1.0300);transform-origin:left 0;">Ara Tutarı</span></div>
<div style="left:1000px;top:457.0px;width:1px;height:9.5px;background:#c6c6c6;border-right:1px solid #fbfbfb;width:2px"></div>
<div style="left:941px;top:451px;width:60.5px;height:18px;overflow:hidden"><span class="t" style="left:1.2px;top:1.50px;font-size:7.4px;line-height:20px;font-weight:bold;color:#1b1b1b;transform:scaleX(1.0200);transform-origin:left 0;">İnd.Ara Toplam</span></div>
<div style="left:1057px;top:457.0px;width:1px;height:9.5px;background:#c6c6c6;border-right:1px solid #fbfbfb;width:2px"></div>
<div style="left:1001px;top:451px;width:57.5px;height:18px;overflow:hidden"><span class="t" style="left:1.2px;top:1.50px;font-size:7.4px;line-height:20px;font-weight:bold;color:#1a1aee;transform:scaleX(1.0400);transform-origin:left 0;">Prm.İsk.Tutarı</span></div>
<div style="left:1113.5px;top:457.0px;width:1px;height:9.5px;background:#c6c6c6;border-right:1px solid #fbfbfb;width:2px"></div>
<div style="left:1058px;top:451px;width:57.0px;height:18px;overflow:hidden"><span class="t" style="left:1.2px;top:1.50px;font-size:7.4px;line-height:20px;font-weight:bold;color:#1b1b1b;transform:scaleX(1.0200);transform-origin:left 0;">Toplam Tutar</span></div>
<div style="left:1171px;top:457.0px;width:1px;height:9.5px;background:#c6c6c6;border-right:1px solid #fbfbfb;width:2px"></div>
<div style="left:1114.5px;top:451px;width:58.0px;height:18px;overflow:hidden"><span class="t" style="left:1.2px;top:1.50px;font-size:7.4px;line-height:20px;font-weight:bold;color:#1b1b1b;transform:scaleX(0.9500);transform-origin:left 0;">KDV li Toplam</span></div>
<div style="left:1181px;top:457.0px;width:1px;height:9.5px;background:#c6c6c6;border-right:1px solid #fbfbfb;width:2px"></div>
<div style="left:1172px;top:451px;width:10.5px;height:18px;overflow:hidden"><span class="t" style="left:1.2px;top:1.50px;font-size:7.4px;line-height:20px;font-weight:bold;color:#8a8a20;transform:scaleX(0.9500);transform-origin:left 0;">Sı</span></div>
<div style="left:252px;top:467.5px;width:930px;height:11px;background:#d4e9fc"></div>
<div style="left:252px;top:478.0px;width:930px;height:1px;background:#e2edf7"></div>
<div style="left:302px;top:467.5px;width:1px;height:11px;background:#e4eef8"></div>
<div style="left:252px;top:462px;width:50.5px;height:18px;overflow:hidden"><span class="t" style="left:1.2px;top:1.50px;font-size:7.4px;line-height:20px;font-weight:bold;color:#111111;transform:scaleX(1.0100);transform-origin:left 0;">ST00001</span></div>
<div style="left:377.5px;top:467.5px;width:1px;height:11px;background:#e4eef8"></div>
<div style="left:302px;top:462px;width:76.0px;height:18px;overflow:hidden"><span class="t" style="left:1.2px;top:1.50px;font-size:7.4px;line-height:20px;font-weight:bold;color:#111111;transform:scaleX(0.9200);transform-origin:left 0;">DOMATES</span></div>
<div style="left:452.5px;top:467.5px;width:1px;height:11px;background:#e4eef8"></div>
<div style="left:547px;top:467.5px;width:1px;height:11px;background:#e4eef8"></div>
<div style="left:594px;top:467.5px;width:1px;height:11px;background:#e4eef8"></div>
<span class="t" style="left:587.88px;top:463.50px;font-size:7.4px;line-height:20px;font-weight:bold;color:#111111;">2</span>
<div style="left:642px;top:467.5px;width:1px;height:11px;background:#e4eef8"></div>
<div style="left:594px;top:462px;width:48.5px;height:18px;overflow:hidden"><span class="t" style="left:1.2px;top:1.50px;font-size:7.4px;line-height:20px;font-weight:bold;color:#111111;transform:scaleX(0.9000);transform-origin:left 0;">KG</span></div>
<div style="left:683px;top:467.5px;width:1px;height:11px;background:#e4eef8"></div>
<span class="t" style="left:676.88px;top:463.50px;font-size:7.4px;line-height:20px;font-weight:bold;color:#111111;">2</span>
<div style="left:731px;top:467.5px;width:1px;height:11px;background:#e4eef8"></div>
<div style="left:683px;top:462px;width:48.5px;height:18px;overflow:hidden"><span class="t" style="left:1.2px;top:1.50px;font-size:7.4px;line-height:20px;font-weight:bold;color:#111111;transform:scaleX(0.9000);transform-origin:left 0;">KG</span></div>
<div style="left:781px;top:467.5px;width:1px;height:11px;background:#e4eef8"></div>
<span class="t" style="left:764.60px;top:463.50px;font-size:7.4px;line-height:20px;font-weight:bold;color:#111111;">7,00</span>
<div style="left:833px;top:467.5px;width:1px;height:11px;background:#e4eef8"></div>
<span class="t" style="left:816.60px;top:463.50px;font-size:7.4px;line-height:20px;font-weight:bold;color:#111111;">5,83</span>
<div style="left:890px;top:467.5px;width:1px;height:11px;background:#e4eef8"></div>
<span class="t" style="left:873.60px;top:463.50px;font-size:7.4px;line-height:20px;font-weight:bold;color:#111111;">5,83</span>
<div style="left:941px;top:467.5px;width:1px;height:11px;background:#e4eef8"></div>
<span class="t" style="left:920.89px;top:463.50px;font-size:7.4px;line-height:20px;font-weight:bold;color:#111111;">11,67</span>
<div style="left:1001px;top:467.5px;width:1px;height:11px;background:#e4eef8"></div>
<span class="t" style="left:980.89px;top:463.50px;font-size:7.4px;line-height:20px;font-weight:bold;color:#111111;">11,67</span>
<div style="left:1058px;top:467.5px;width:1px;height:11px;background:#e4eef8"></div>
<span class="t" style="left:1041.60px;top:463.50px;font-size:7.4px;line-height:20px;font-weight:bold;color:#1a1aee;transform:scaleX(1.0500);transform-origin:right 0;">0,00</span>
<div style="left:1114.5px;top:467.5px;width:1px;height:11px;background:#e4eef8"></div>
<span class="t" style="left:1094.39px;top:463.50px;font-size:7.4px;line-height:20px;font-weight:bold;color:#111111;">11,67</span>
<div style="left:1172px;top:467.5px;width:1px;height:11px;background:#e4eef8"></div>
<span class="t" style="left:1151.48px;top:463.50px;font-size:7.4px;line-height:20px;font-weight:bold;color:#111111;">14,00</span>
<div style="left:1182px;top:467.5px;width:1px;height:11px;background:#e4eef8"></div>
<div style="left:251px;top:467.5px;width:1px;height:11px;background:#eeeeee"></div>
<div style="left:245px;top:477.5px;width:6px;height:1px;background:#f0f0f0"></div>
<svg style="position:absolute;left:247px;top:470.0px" width="5" height="6"><path d="M0.5 0L4.5 3L0.5 6Z" fill="#000"/></svg>
<div style="left:302px;top:478.5px;width:1px;height:11px;background:#eeeeee"></div>
<div style="left:252px;top:473px;width:50.5px;height:18px;overflow:hidden"><span class="t" style="left:1.2px;top:1.50px;font-size:7.4px;line-height:20px;font-weight:bold;color:#111111;transform:scaleX(1.0100);transform-origin:left 0;">ST00002</span></div>
<div style="left:377.5px;top:478.5px;width:1px;height:11px;background:#eeeeee"></div>
<div style="left:302px;top:473px;width:76.0px;height:18px;overflow:hidden"><span class="t" style="left:1.2px;top:1.50px;font-size:7.4px;line-height:20px;font-weight:bold;color:#111111;transform:scaleX(0.9100);transform-origin:left 0;">ŞİŞE SÜT</span></div>
<div style="left:452.5px;top:478.5px;width:1px;height:11px;background:#eeeeee"></div>
<div style="left:547px;top:478.5px;width:1px;height:11px;background:#eeeeee"></div>
<div style="left:594px;top:478.5px;width:1px;height:11px;background:#eeeeee"></div>
<span class="t" style="left:587.88px;top:474.50px;font-size:7.4px;line-height:20px;font-weight:bold;color:#111111;">1</span>
<div style="left:642px;top:478.5px;width:1px;height:11px;background:#eeeeee"></div>
<div style="left:594px;top:473px;width:48.5px;height:18px;overflow:hidden"><span class="t" style="left:1.2px;top:1.50px;font-size:7.4px;line-height:20px;font-weight:bold;color:#111111;transform:scaleX(0.9000);transform-origin:left 0;">ADET</span></div>
<div style="left:683px;top:478.5px;width:1px;height:11px;background:#eeeeee"></div>
<span class="t" style="left:676.88px;top:474.50px;font-size:7.4px;line-height:20px;font-weight:bold;color:#111111;">1</span>
<div style="left:731px;top:478.5px;width:1px;height:11px;background:#eeeeee"></div>
<div style="left:683px;top:473px;width:48.5px;height:18px;overflow:hidden"><span class="t" style="left:1.2px;top:1.50px;font-size:7.4px;line-height:20px;font-weight:bold;color:#111111;transform:scaleX(0.9000);transform-origin:left 0;">ADET</span></div>
<div style="left:781px;top:478.5px;width:1px;height:11px;background:#eeeeee"></div>
<span class="t" style="left:764.60px;top:474.50px;font-size:7.4px;line-height:20px;font-weight:bold;color:#111111;">4,00</span>
<div style="left:833px;top:478.5px;width:1px;height:11px;background:#eeeeee"></div>
<span class="t" style="left:816.60px;top:474.50px;font-size:7.4px;line-height:20px;font-weight:bold;color:#111111;">3,33</span>
<div style="left:890px;top:478.5px;width:1px;height:11px;background:#eeeeee"></div>
<span class="t" style="left:873.60px;top:474.50px;font-size:7.4px;line-height:20px;font-weight:bold;color:#111111;">3,33</span>
<div style="left:941px;top:478.5px;width:1px;height:11px;background:#eeeeee"></div>
<span class="t" style="left:924.60px;top:474.50px;font-size:7.4px;line-height:20px;font-weight:bold;color:#111111;">3,33</span>
<div style="left:1001px;top:478.5px;width:1px;height:11px;background:#eeeeee"></div>
<span class="t" style="left:984.60px;top:474.50px;font-size:7.4px;line-height:20px;font-weight:bold;color:#111111;">3,33</span>
<div style="left:1058px;top:478.5px;width:1px;height:11px;background:#eeeeee"></div>
<span class="t" style="left:1041.60px;top:474.50px;font-size:7.4px;line-height:20px;font-weight:bold;color:#1a1aee;transform:scaleX(1.0500);transform-origin:right 0;">0,00</span>
<div style="left:1114.5px;top:478.5px;width:1px;height:11px;background:#eeeeee"></div>
<span class="t" style="left:1098.10px;top:474.50px;font-size:7.4px;line-height:20px;font-weight:bold;color:#111111;">3,33</span>
<div style="left:1172px;top:478.5px;width:1px;height:11px;background:#eeeeee"></div>
<span class="t" style="left:1155.60px;top:474.50px;font-size:7.4px;line-height:20px;font-weight:bold;color:#111111;">4,00</span>
<div style="left:1182px;top:478.5px;width:1px;height:11px;background:#eeeeee"></div>
<div style="left:251px;top:478.5px;width:1px;height:11px;background:#eeeeee"></div>
<div style="left:245px;top:488.5px;width:6px;height:1px;background:#f0f0f0"></div>
<div style="left:252px;top:489.5px;width:930px;height:11px;background:#d4e9fc"></div>
<div style="left:252px;top:500.0px;width:930px;height:1px;background:#e2edf7"></div>
<div style="left:302px;top:489.5px;width:1px;height:11px;background:#e4eef8"></div>
<div style="left:252px;top:484px;width:50.5px;height:18px;overflow:hidden"><span class="t" style="left:1.2px;top:1.50px;font-size:7.4px;line-height:20px;font-weight:bold;color:#111111;transform:scaleX(1.0100);transform-origin:left 0;">ST00003</span></div>
<div style="left:377.5px;top:489.5px;width:1px;height:11px;background:#e4eef8"></div>
<div style="left:302px;top:484px;width:76.0px;height:18px;overflow:hidden"><span class="t" style="left:1.2px;top:1.50px;font-size:7.4px;line-height:20px;font-weight:bold;color:#111111;transform:scaleX(0.9050);transform-origin:left 0;">YEŞİL BİBER</span></div>
<div style="left:452.5px;top:489.5px;width:1px;height:11px;background:#e4eef8"></div>
<div style="left:547px;top:489.5px;width:1px;height:11px;background:#e4eef8"></div>
<div style="left:594px;top:489.5px;width:1px;height:11px;background:#e4eef8"></div>
<span class="t" style="left:587.88px;top:485.50px;font-size:7.4px;line-height:20px;font-weight:bold;color:#111111;">1</span>
<div style="left:642px;top:489.5px;width:1px;height:11px;background:#e4eef8"></div>
<div style="left:594px;top:484px;width:48.5px;height:18px;overflow:hidden"><span class="t" style="left:1.2px;top:1.50px;font-size:7.4px;line-height:20px;font-weight:bold;color:#111111;transform:scaleX(0.9000);transform-origin:left 0;">KG</span></div>
<div style="left:683px;top:489.5px;width:1px;height:11px;background:#e4eef8"></div>
<span class="t" style="left:676.88px;top:485.50px;font-size:7.4px;line-height:20px;font-weight:bold;color:#111111;">1</span>
<div style="left:731px;top:489.5px;width:1px;height:11px;background:#e4eef8"></div>
<div style="left:683px;top:484px;width:48.5px;height:18px;overflow:hidden"><span class="t" style="left:1.2px;top:1.50px;font-size:7.4px;line-height:20px;font-weight:bold;color:#111111;transform:scaleX(0.9000);transform-origin:left 0;">KG</span></div>
<div style="left:781px;top:489.5px;width:1px;height:11px;background:#e4eef8"></div>
<span class="t" style="left:764.60px;top:485.50px;font-size:7.4px;line-height:20px;font-weight:bold;color:#111111;">9,00</span>
<div style="left:833px;top:489.5px;width:1px;height:11px;background:#e4eef8"></div>
<span class="t" style="left:816.60px;top:485.50px;font-size:7.4px;line-height:20px;font-weight:bold;color:#111111;">7,50</span>
<div style="left:890px;top:489.5px;width:1px;height:11px;background:#e4eef8"></div>
<span class="t" style="left:873.60px;top:485.50px;font-size:7.4px;line-height:20px;font-weight:bold;color:#111111;">7,50</span>
<div style="left:941px;top:489.5px;width:1px;height:11px;background:#e4eef8"></div>
<span class="t" style="left:924.60px;top:485.50px;font-size:7.4px;line-height:20px;font-weight:bold;color:#111111;">7,50</span>
<div style="left:1001px;top:489.5px;width:1px;height:11px;background:#e4eef8"></div>
<span class="t" style="left:984.60px;top:485.50px;font-size:7.4px;line-height:20px;font-weight:bold;color:#111111;">7,50</span>
<div style="left:1058px;top:489.5px;width:1px;height:11px;background:#e4eef8"></div>
<span class="t" style="left:1041.60px;top:485.50px;font-size:7.4px;line-height:20px;font-weight:bold;color:#1a1aee;transform:scaleX(1.0500);transform-origin:right 0;">0,00</span>
<div style="left:1114.5px;top:489.5px;width:1px;height:11px;background:#e4eef8"></div>
<span class="t" style="left:1098.10px;top:485.50px;font-size:7.4px;line-height:20px;font-weight:bold;color:#111111;">7,50</span>
<div style="left:1172px;top:489.5px;width:1px;height:11px;background:#e4eef8"></div>
<span class="t" style="left:1155.60px;top:485.50px;font-size:7.4px;line-height:20px;font-weight:bold;color:#111111;">9,00</span>
<div style="left:1182px;top:489.5px;width:1px;height:11px;background:#e4eef8"></div>
<div style="left:251px;top:489.5px;width:1px;height:11px;background:#eeeeee"></div>
<div style="left:245px;top:499.5px;width:6px;height:1px;background:#f0f0f0"></div>
<div style="left:1182px;top:456px;width:9.5px;height:48.5px;background:#f0f0f0"></div>
<div style="left:1183px;top:468px;width:7.5px;height:10.5px;background:#cdcdcd"></div>
<svg style="position:absolute;left:1183.75px;top:460px" width="6" height="4"><path d="M0.5 3.5L3 1L5.5 3.5" stroke="#404040" fill="none" stroke-width="1.3"/></svg>
<svg style="position:absolute;left:1183.75px;top:497.0px" width="6" height="4"><path d="M0.5 0.5L3 3L5.5 0.5" stroke="#404040" fill="none" stroke-width="1.3"/></svg>
<div style="left:245px;top:504.5px;width:946.5px;height:10.5px;background:#f0f0f0"></div>
<div style="left:254px;top:505.0px;width:10px;height:9.5px;background:#cdcdcd"></div>
<svg style="position:absolute;left:247.5px;top:506.75px" width="4" height="6"><path d="M3.5 0.5L1 3L3.5 5.5" stroke="#404040" fill="none" stroke-width="1.3"/></svg>
<svg style="position:absolute;left:1175px;top:506.75px" width="4" height="6"><path d="M0.5 0.5L3 3L0.5 5.5" stroke="#404040" fill="none" stroke-width="1.3"/></svg>
<div style="left:244px;top:518px;width:98px;height:18px;background:#cce4f7;border:1px solid #3d7ebf;border-radius:1px"></div>
<span class="t" style="left:267.52px;top:517.50px;font-size:7.6px;line-height:20px;font-weight:bold;color:#111;transform:scaleX(0.9518);transform-origin:center 0;">Fiş Toplamları</span>
<div style="left:345px;top:518px;width:98px;height:18px;background:#e1e1e1;border:1px solid #bdbdbd"></div>
<span class="t" style="left:365.99px;top:517.50px;font-size:7.6px;line-height:20px;font-weight:bold;color:#111;transform:scaleX(0.9460);transform-origin:center 0;">KDV Toplamları</span>
<div style="left:367.5px;top:531px;width:5px;height:0.8px;background:#222"></div>
<div style="left:446px;top:518px;width:98px;height:18px;background:#e1e1e1;border:1px solid #bdbdbd"></div>
<span class="t" style="left:461.50px;top:517.50px;font-size:7.6px;line-height:20px;font-weight:bold;color:#111;">İskonto Toplamları</span>
<div style="left:461.5px;top:531px;width:3px;height:0.8px;background:#222"></div>
<div style="left:244px;top:540.5px;width:948px;height:88px;background:#ffffff;border:1px solid #b8b8b8"></div>
<div style="left:245px;top:541.5px;width:210px;height:11px;background:linear-gradient(#f7f7f7,#ececec);border-bottom:1px solid #c2c2c2"></div>
<svg style="position:absolute;left:247px;top:545px" width="6" height="5"><rect x="0" y="0" width="1.3" height="1.3" fill="#5a4a3a"/><rect x="3" y="0" width="1.3" height="1.3" fill="#5a4a3a"/><rect x="0" y="3" width="1.3" height="1.3" fill="#5a4a3a"/><rect x="3" y="3" width="1.3" height="1.3" fill="#5a4a3a"/></svg>
<div style="left:283.5px;top:542px;width:1px;height:10px;background:#c6c6c6;border-right:1px solid #fbfbfb;width:2px"></div>
<div style="left:253px;top:536px;width:32.0px;height:18px;overflow:hidden"><span class="t" style="left:1.2px;top:1.50px;font-size:7.4px;line-height:20px;font-weight:bold;color:#8a8a20;transform:scaleX(0.9800);transform-origin:left 0;">Hesap</span></div>
<div style="left:341px;top:542px;width:1px;height:10px;background:#c6c6c6;border-right:1px solid #fbfbfb;width:2px"></div>
<div style="left:284.5px;top:536px;width:58.0px;height:18px;overflow:hidden"><span class="t" style="left:1.2px;top:1.50px;font-size:7.4px;line-height:20px;font-weight:bold;color:#1b1b1b;transform:scaleX(0.9818);transform-origin:left 0;">Toplam Satış</span></div>
<div style="left:397.5px;top:542px;width:1px;height:10px;background:#c6c6c6;border-right:1px solid #fbfbfb;width:2px"></div>
<div style="left:342px;top:536px;width:57.0px;height:18px;overflow:hidden"><span class="t" style="left:1.2px;top:1.50px;font-size:7.4px;line-height:20px;font-weight:bold;color:#1b1b1b;transform:scaleX(0.9800);transform-origin:left 0;">Toplam Alış</span></div>
<div style="left:454px;top:542px;width:1px;height:10px;background:#c6c6c6;border-right:1px solid #fbfbfb;width:2px"></div>
<div style="left:398.5px;top:536px;width:57.0px;height:18px;overflow:hidden"><span class="t" style="left:1.2px;top:1.50px;font-size:7.4px;line-height:20px;font-weight:bold;color:#1b1b1b;transform:scaleX(0.9750);transform-origin:left 0;">Fark</span></div>
<div style="left:253px;top:552.5px;width:202px;height:10.5px;background:#d7e9fb"></div>
<div style="left:283.5px;top:552.5px;width:1px;height:10.5px;background:#e6eef6"></div>
<div style="left:253px;top:547px;width:32.0px;height:18px;overflow:hidden"><span class="t" style="left:1.2px;top:1.50px;font-size:7.4px;line-height:20px;font-weight:bold;color:#8a8a20;transform:scaleX(0.9000);transform-origin:left 0;">TL</span></div>
<div style="left:341px;top:552.5px;width:1px;height:10.5px;background:#e6eef6"></div>
<span class="t" style="left:321.48px;top:548.50px;font-size:7.4px;line-height:20px;font-weight:bold;color:#111;">70,00</span>
<div style="left:397.5px;top:552.5px;width:1px;height:10.5px;background:#e6eef6"></div>
<span class="t" style="left:382.10px;top:548.50px;font-size:7.4px;line-height:20px;font-weight:bold;color:#111;transform:scaleX(1.0500);transform-origin:right 0;">0,00</span>
<div style="left:454px;top:552.5px;width:1px;height:10.5px;background:#e6eef6"></div>
<span class="t" style="left:434.48px;top:548.50px;font-size:7.4px;line-height:20px;font-weight:bold;color:#111;">70,00</span>
<svg style="position:absolute;left:247px;top:555px" width="5" height="6"><path d="M0.5 0L4.5 3L0.5 6Z" fill="#000"/></svg>
<div style="left:239.5px;top:633px;width:957px;height:1.5px;background:#c8c8c8"></div>
<svg style="position:absolute;left:703px;top:631px" width="25" height="2"><path d="M0 1H25" stroke="#888" stroke-width="1" stroke-dasharray="1 1"/></svg>
<svg style="position:absolute;left:845px;top:50.5px" width="21" height="19" viewBox="0 0 21 19">
<path d="M6 9 L8.5 1 L15.5 0.5 L15 7.5Z" fill="#e4ecef" stroke="#b9c6cc" stroke-width="0.6"/>
<path d="M15.3 1.5 L17.5 2.5 L15.5 8Z" fill="#2a3640"/>
<path d="M2 9.5 Q2 6.5 5 6.2 L15 5.5 Q19.5 6 19.8 9 L19.5 14.5 Q19 16.5 16.5 16.8 L14 17 L4 13.5 Q1.8 12.8 2 11Z" fill="#1f2b36"/>
<path d="M15 7 Q19 8 19.3 11.5 L19 15 Q17 16.5 15.5 16 Z" fill="#5a6a78"/>
<path d="M4 8.5 L14 8 L14 9.5 L4 10Z" fill="#3a4a58"/>
<path d="M1 14.5 L5.5 12 L13.5 14.8 L10 18.5 Z" fill="#d8dfe3" stroke="#2a3640" stroke-width="0.7"/>
</svg>
<svg style="position:absolute;left:897px;top:50.5px" width="21" height="19" viewBox="0 0 21 19">
<path d="M6 9 L8.5 1 L15.5 0.5 L15 7.5Z" fill="#e4ecef" stroke="#b9c6cc" stroke-width="0.6"/>
<path d="M15.3 1.5 L17.5 2.5 L15.5 8Z" fill="#2a3640"/>
<path d="M2 9.5 Q2 6.5 5 6.2 L15 5.5 Q19.5 6 19.8 9 L19.5 14.5 Q19 16.5 16.5 16.8 L14 17 L4 13.5 Q1.8 12.8 2 11Z" fill="#1f2b36"/>
<path d="M15 7 Q19 8 19.3 11.5 L19 15 Q17 16.5 15.5 16 Z" fill="#5a6a78"/>
<path d="M4 8.5 L14 8 L14 9.5 L4 10Z" fill="#3a4a58"/>
<path d="M1 14.5 L5.5 12 L13.5 14.8 L10 18.5 Z" fill="#d8dfe3" stroke="#2a3640" stroke-width="0.7"/>
</svg>
<svg style="position:absolute;left:952px;top:51px" width="16" height="18" viewBox="0 0 16 18">
<path d="M1.5 1 L13.5 1.5 L14.5 16.5 L1.5 17 Z" fill="#f6f8fa" stroke="#8c98a4" stroke-width="1.1"/>
<rect x="3" y="3" width="9.5" height="1.2" fill="#b0b8c8"/>
<rect x="3" y="5.3" width="9.5" height="1.6" fill="#8fb4e8"/>
<rect x="2.8" y="7.4" width="1.2" height="5" fill="#c44"/>
<rect x="3" y="8.3" width="9.5" height="1.2" fill="#6a9ad8"/>
<rect x="3.5" y="10" width="9.3" height="3.6" fill="#1f8a3a"/>
<rect x="5" y="11" width="6" height="1" fill="#fff"/>
<rect x="3.5" y="13.4" width="9.3" height="1" fill="#c03030"/>
</svg>
<svg style="position:absolute;left:1002px;top:50px" width="21" height="20" viewBox="0 0 21 20">
<path d="M3 1.5 L20 4 L20 18.5 L3.5 16.5 Z" fill="#d4d8dc" stroke="#a8aeb4" stroke-width="0.8"/>
<path d="M3 1.5 L11.5 10.5 L20 4" fill="none" stroke="#f4f6f8" stroke-width="1.1"/>
<path d="M3.5 16.5 L10 9.5 M20 18.5 L13 10.5" stroke="#b8bec4" stroke-width="0.7"/>
<circle cx="5" cy="15" r="5" fill="#1aa01a"/>
<circle cx="5" cy="14" r="3.6" fill="#3ccc3c"/>
<path d="M2 14 L5.5 14 L5.5 12 L8.5 15 L5.5 18 L5.5 16 L2 16Z" fill="#f4f4f4"/>
</svg>
<svg style="position:absolute;left:1054px;top:51.5px" width="21" height="17" viewBox="0 0 21 17">
<g transform="translate(11.5 10.5)">
<path d="M-1.2 -6.5 L1.2 -6.5 L1.6 -4.6 L3.3 -3.9 L4.9 -5.1 L6.2 -3.6 L5 -2 L5.6 -0.3 L7.4 0.3 L7.2 2.3 L5.3 2.6 L4.5 4.2 L5.5 5.9 L3.7 7 L2.3 5.6 L0.5 6 L-0.3 7.6 L-2.3 7.1 L-2.3 5.3 L-3.8 4.3 L-5.6 5 L-6.5 3.2 L-5 2 L-5.2 0.2 L-7 -0.6 L-6.5 -2.5 L-4.6 -2.4 L-3.5 -3.8 L-4.1 -5.6 L-2.2 -6.4 Z" fill="#e8c83c" stroke="#9a8226" stroke-width="0.5"/>
<circle cx="0" cy="0.5" r="2.2" fill="#7a6418"/>
<circle cx="0" cy="0.5" r="1" fill="#f0e080"/>
</g>
<path d="M1.5 10.5 L13 3.5 L14.2 5 L2.8 12 Z" fill="#d0d8e0" stroke="#6a7a8a" stroke-width="0.6"/>
<path d="M13 3.5 L15.5 0.8 L18.5 0.5 L17 2.2 L18.2 3.6 L19.8 2.3 L19.2 5.2 L16.3 6.2 L14.2 5 Z" fill="#c8d2dc" stroke="#6a7a8a" stroke-width="0.6"/>
</svg>
<svg style="position:absolute;left:1106px;top:55px" width="21" height="10" viewBox="0 0 21 10">
<path d="M0.5 2.5 L5 0.5 L20.5 5 L17 9.5 Z" fill="#3a3e44"/>
<path d="M3 2.8 L16 6.5" stroke="#8a2a2a" stroke-width="1" stroke-dasharray="1.5 1"/>
<path d="M1 3.5 L17 9" stroke="#c8ccd0" stroke-width="0.8"/>
</svg>
<svg style="position:absolute;left:1162px;top:50px" width="17" height="19" viewBox="0 0 17 19">
<path d="M0.5 2 L3 0.5 L14 0.5 L14 17.5 L3 18.5 L0.5 17.5Z" fill="#8c6a2a"/>
<rect x="3" y="1.5" width="10.5" height="16" fill="#b58e48"/>
<rect x="5" y="2.5" width="3" height="14" fill="#9c7634"/>
<rect x="9.5" y="2.5" width="3" height="14" fill="#a6823c"/>
<path d="M9 12 L15.5 18 M15.5 12 L9 18" stroke="#e8383a" stroke-width="2"/>
</svg>
<span class="t" style="left:831.00px;top:65.50px;font-size:6.9px;line-height:20px;font-weight:bold;color:#1b1b1b;transform:scaleX(1.0948);transform-origin:left 0;">Fatura Yazdır</span>
<span class="t r" style="left:897.10px;top:65.50px;font-size:6.9px;line-height:20px;font-weight:normal;color:#333;transform:scaleX(0.9213);transform-origin:left 0;">Yazdır</span>
<span class="t r" style="left:936.90px;top:65.50px;font-size:6.9px;line-height:20px;font-weight:normal;color:#333;transform:scaleX(0.9649);transform-origin:left 0;">Vardiya Listesi</span>
<span class="t r" style="left:992.60px;top:65.50px;font-size:6.9px;line-height:20px;font-weight:normal;color:#333;transform:scaleX(0.9648);transform-origin:left 0;">Mail Ayarları</span>
<span class="t r" style="left:1039.60px;top:65.50px;font-size:6.9px;line-height:20px;font-weight:normal;color:#333;transform:scaleX(0.9652);transform-origin:left 0;">Görünüm Ayarla</span>
<span class="t r" style="left:1102.20px;top:65.50px;font-size:6.9px;line-height:20px;font-weight:normal;color:#333;transform:scaleX(0.9045);transform-origin:left 0;">Kısayollar</span>
<span class="t r" style="left:1159.40px;top:65.50px;font-size:6.9px;line-height:20px;font-weight:normal;color:#333;">Kapat</span>
<div style="left:0px;top:637px;width:1196px;height:14px;background:#f0f0f0"></div>
<div style="left:0px;top:651px;width:1200px;height:2px;background:#fafafa"></div>
<div style="left:1068.75px;top:640.6px;width:120.6px;height:9.6px;background:#e3e3e3;border:1px solid #c9c9c9"></div>
<span class="t r" style="left:1088.75px;top:635.50px;font-size:6.9px;line-height:20px;font-weight:normal;color:#222;transform:scaleX(1.0431);transform-origin:left 0;">Filtreleme Seçenekleri</span>
<div style="left:1181px;top:641.5px;width:8px;height:8.5px;background:#f8f8f8;border-left:1px solid #c9c9c9"></div>
<svg style="position:absolute;left:1182.5px;top:643px" width="5" height="5"><path d="M0 0.5H5L2.5 4.5Z" fill="#111"/></svg>
<div style="left:189.5px;top:639px;width:139.5px;height:12.3px;background:#ffffff;border:1px solid #767676;box-shadow:1px 1px 1px rgba(0,0,0,0.15)"></div>
<span class="t r" style="left:193.00px;top:635.50px;font-size:8px;line-height:20px;font-weight:normal;color:#444;transform:scaleX(0.9066);transform-origin:left 0;">Görsel ve Katalog Kontrolleri.xlsx - Excel</span>
<svg style="position:absolute;left:3px;top:54px" width="20" height="20" viewBox="0 0 20 20">
<path d="M6 1.2 L14.5 1.8 L14.5 15.5 L6 16 Z" fill="#f2f2f2"/>
<path d="M8 3 V14 M11 3 V14" stroke="#c8c8c8" stroke-width="0.8"/>
<path d="M1.5 18.5 L7 13.5" stroke="#e8e8e8" stroke-width="1"/>
<ellipse cx="13" cy="16.5" rx="4.5" ry="2.4" fill="#2ab4f0" transform="rotate(15 13 16.5)"/>
<path d="M15 16.5 L19 16.5 L17 19Z" fill="#22bb22"/>
</svg>
<div style="left:1196px;top:46px;width:1.5px;height:605px;background:#6f8fc9"></div>
<svg style="position:absolute;left:236px;top:346px" width="2" height="58"><path d="M1 0V58" stroke="#8a8a8a" stroke-width="1" stroke-dasharray="1 2"/></svg>
<div style="left:1199px;top:398px;width:1px;height:10px;background:#3a3a48"></div>
</body></html>
